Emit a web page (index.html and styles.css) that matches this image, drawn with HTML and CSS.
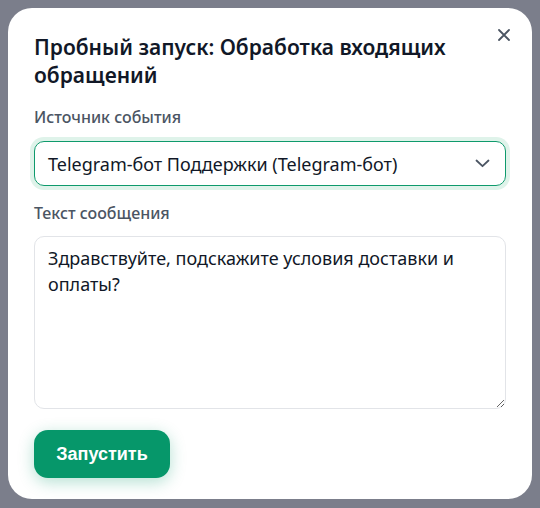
FILE: index.html
```html
<!DOCTYPE html>
<html lang="ru">
<head>
<meta charset="utf-8">
<link rel="stylesheet" href="styles.css">
</head>
<body>
<div class="backdrop">
  <div class="modal">
    <button class="close" aria-label="Закрыть">
      <svg width="12" height="12" viewBox="0 0 12 12"><path d="M1 1L11 11M11 1L1 11" stroke="#4b5563" stroke-width="1.8" stroke-linecap="round"/></svg>
    </button>
    <h2 class="title">Пробный запуск: Обработка входящих обращений</h2>
    <div class="field">
      <label class="label">Источник события</label>
      <div class="select">
        <span class="select-text">Telegram-бот Поддержки (Telegram-бот)</span>
        <svg class="chevron" width="15" height="9" viewBox="0 0 15 9"><path d="M1.5 1.5L7.5 7.2L13.5 1.5" fill="none" stroke="#4b5563" stroke-width="1.8" stroke-linecap="round" stroke-linejoin="round"/></svg>
      </div>
    </div>
    <div class="field field-2">
      <label class="label">Текст сообщения</label>
      <textarea class="textarea">Здравствуйте, подскажите условия доставки и оплаты?</textarea>
    </div>
    <button class="run">Запустить</button>
  </div>
</div>
</body>
</html>
```
FILE: styles.css
```css
html, body {
  margin: 0;
  padding: 0;
  height: 100%;
}
body {
  background: #7b7e8b;
  font-family: "Noto Sans", "Open Sans", sans-serif;
}
.backdrop {
  padding: 8px 8px 9px 8px;
  height: 100%;
  box-sizing: border-box;
}
.modal {
  position: relative;
  background: #fff;
  border-radius: 24px;
  width: 524px;
  height: 491px;
  box-sizing: border-box;
  padding: 25px 26px 21px 26px;
  display: flex;
  flex-direction: column;
}
.close {
  position: absolute;
  top: 20px;
  right: 21px;
  width: 14px;
  height: 14px;
  padding: 0;
  border: none;
  background: none;
  display: flex;
  align-items: center;
  justify-content: center;
}
.title {
  margin: 0;
  font-size: 21px;
  line-height: 28px;
  font-weight: 600;
  color: #111827;
  padding-right: 40px;
}
.field {
  display: flex;
  flex-direction: column;
  margin-top: 18px;
}
.field-2 {
  margin-top: 17px;
}
.label {
  font-size: 16px;
  line-height: 20px;
  font-weight: 500;
  color: #4b5563;
  margin-bottom: 14px;
}
.field-2 .label {
  margin-bottom: 13px;
}
.select {
  height: 45px;
  box-sizing: border-box;
  border: 1.5px solid #0e9a6c;
  border-radius: 10px;
  box-shadow: 0 0 0 4px #dff3ea;
  display: flex;
  align-items: center;
  justify-content: space-between;
  padding: 0 15px 0 13px;
}
.select-text {
  font-size: 18px;
  color: #111827;
}
.textarea {
  height: 173px;
  box-sizing: border-box;
  border: 1px solid #e2e4e8;
  border-radius: 10px;
  padding: 8px 13px;
  font-family: "Noto Sans", "Open Sans", sans-serif;
  font-size: 18px;
  line-height: 26px;
  color: #111827;
  resize: vertical;
  outline: none;
}
.run {
  margin-top: 21px;
  align-self: flex-start;
  width: 136px;
  height: 48px;
  border: none;
  border-radius: 14px;
  background: #06976a;
  color: #fff;
  font-family: "Liberation Sans", Arial, sans-serif;
  font-size: 18px;
  font-weight: 700;
  box-shadow: 0 4px 16px rgba(6, 151, 106, 0.3);
}
```
